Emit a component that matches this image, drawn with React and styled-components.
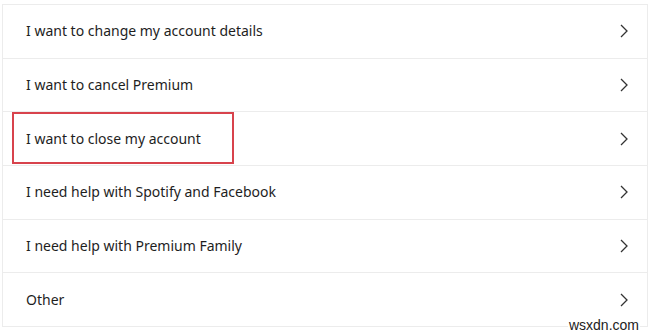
import styled, { createGlobalStyle } from 'styled-components'

const GlobalStyle = createGlobalStyle`
  body {
    margin: 0;
    background: #fff;
  }
`

const items = [
  'I want to change my account details',
  'I want to cancel Premium',
  'I want to close my account',
  'I need help with Spotify and Facebook',
  'I need help with Premium Family',
  'Other',
]

const Page = styled.div`
  position: relative;
  width: 650px;
  height: 335px;
  padding: 4px 2px 0 2px;
  box-sizing: border-box;
  background: #fff;
`

const List = styled.ul`
  list-style: none;
  margin: 0;
  padding: 0;
  border: 1px solid #ececec;
  border-bottom: none;
`

const Row = styled.li`
  position: relative;
  display: flex;
  align-items: center;
  justify-content: space-between;
  height: 52.7px;
  padding: 0 18px 0 23px;
  border-bottom: 1px solid #ececec;
  font-family: 'Noto Sans', 'Liberation Sans', sans-serif;
  font-size: 14px;
  color: #1e1e1e;
`

const Label = styled.span`
  margin-top: -1px;
`

const Highlight = styled.div`
  position: absolute;
  left: 9px;
  top: 0;
  width: 222px;
  height: 52px;
  box-sizing: border-box;
  border: 2px solid #d8434c;
`

const Chevron = () => (
  <svg width="10" height="16" viewBox="0 0 10 16" fill="none">
    <path d="M2 2 L8 8 L2 14" stroke="#333" strokeWidth="1.3" />
  </svg>
)

const Watermark = styled.div`
  position: absolute;
  right: 10px;
  bottom: 3px;
  font-family: 'Liberation Sans', Arial, sans-serif;
  font-size: 14px;
  line-height: 14px;
  color: #222;
  background: #fff;
  padding: 0 1px;
`

const App = () => (
  <Page>
    <GlobalStyle />
    <List>
      {items.map((text, i) => (
        <Row key={text}>
          <Label>{text}</Label>
          <Chevron />
          {i === 2 && <Highlight />}
        </Row>
      ))}
    </List>
    <Watermark>wsxdn.com</Watermark>
  </Page>
)

export default App
